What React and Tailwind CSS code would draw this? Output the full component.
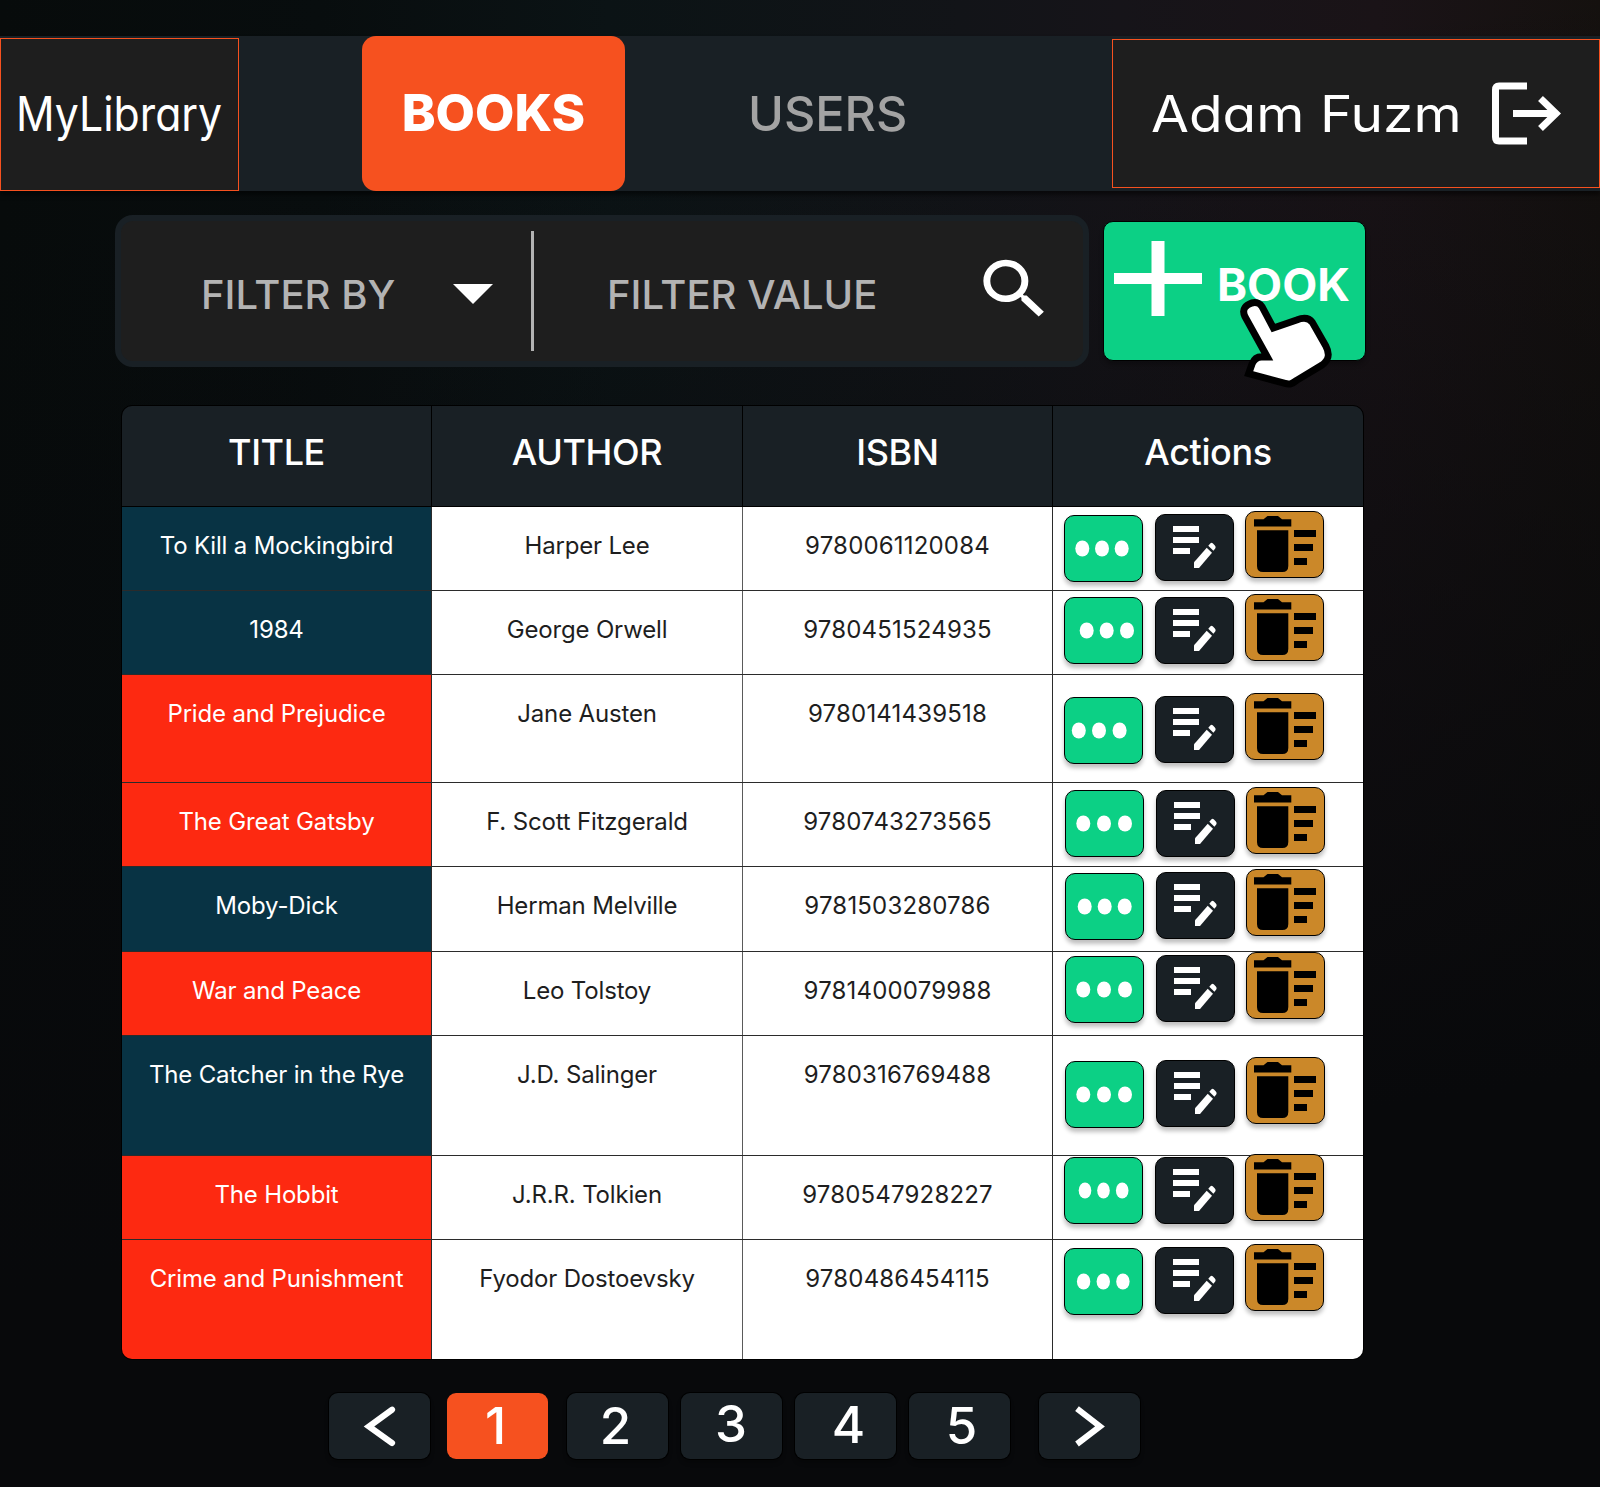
import React from "react";

const NAVY = "bg-[#083344]";
const RED = "bg-[#fd2911]";

const dots = (cx, rx = 7) => ({ cx, rx });

const BOOKS = [
  { title: "To Kill a Mockingbird", author: "Harper Lee", isbn: "9780061120084", bg: NAVY, h: "h-[84px]", pad: "pt-[8px] pl-[11px]", dots: dots([18.3, 38, 57.7]) },
  { title: "1984", author: "George Orwell", isbn: "9780451524935", bg: NAVY, h: "h-[84px]", pad: "pt-[7px] pl-[11px]", dots: dots([22.7, 42.7, 63]), raised: true },
  { title: "Pride and Prejudice", author: "Jane Austen", isbn: "9780141439518", bg: RED, h: "h-[108px]", pad: "pt-[22px] pl-[11px]", dots: dots([14.8, 35, 55.6]) },
  { title: "The Great Gatsby", author: "F. Scott Fitzgerald", isbn: "9780743273565", bg: RED, h: "h-[84px]", pad: "pt-[8px] pl-[12px]", dots: dots([18.3, 39, 60]), raised: true, trashShift: true },
  { title: "Moby-Dick", author: "Herman Melville", isbn: "9781503280786", bg: NAVY, h: "h-[85px]", pad: "pt-[6px] pl-[12px]", dots: dots([19.7, 39.7, 59.7]), trashShift: true },
  { title: "War and Peace", author: "Leo Tolstoy", isbn: "9781400079988", bg: RED, h: "h-[84px]", pad: "pt-[4px] pl-[12px]", dots: dots([18.3, 39, 60]), trashShift: true },
  { title: "The Catcher in the Rye", author: "J.D. Salinger", isbn: "9780316769488", bg: NAVY, h: "h-[120px]", pad: "pt-[25px] pl-[12px]", dots: dots([18.3, 39, 60]), trashShift: true },
  { title: "The Hobbit", author: "J.R.R. Tolkien", isbn: "9780547928227", bg: RED, h: "h-[84px]", pad: "pt-[2px] pl-[11px]", dots: dots([21, 39.5, 58.2], 6.3), raised: true },
  { title: "Crime and Punishment", author: "Fyodor Dostoevsky", isbn: "9780486454115", bg: RED, h: "h-[119px]", pad: "pt-[8px] pl-[11px]", dots: dots([19.6, 39.3, 58.9], 6.7) },
];

const COLS = "grid grid-cols-[310px_311px_310px_310px]";
const ACTION = "h-[67px] w-[79px] shrink-0 rounded-[10px] border border-black shadow-[0_4px_4px_rgba(0,0,0,0.25)]";

function ActionIcon({ children }) {
  return (
    <svg className="-mt-px -ml-px block h-[67px] w-[79px]" viewBox="0 0 79 67">
      {children}
    </svg>
  );
}

function Actions({ row }) {
  return (
    <div className={`flex items-start bg-white ${row.pad}`}>
      <button className={`${ACTION} bg-[#0cd085] ${row.raised ? "-mt-px" : ""}`}>
        <ActionIcon>
          {row.dots.cx.map((x) => (
            <ellipse key={x} cx={x} cy="33.5" rx={row.dots.rx} ry="8" fill="#fff" />
          ))}
        </ActionIcon>
      </button>
      <button className={`${ACTION} -mt-px ml-[12px] bg-[#192025]`}>
        <ActionIcon>
          <g fill="#fff">
            <path d="M18 12h26v6H18zM18 23h26v6H18zM18 34h17v6H18z" />
            <path d="M39 48.3 51.7 33.7l5.3 5L44 54h-5z" />
            <path d="M53.3 31.8 55.5 29.3q1-1 2.2 0l2.2 2.2q1.4 1.5 .3 3l-1.8 2.2z" />
          </g>
        </ActionIcon>
      </button>
      <button className={`${ACTION} -mt-[4px] ml-[11px] bg-[#cb8829]`}>
        <ActionIcon>
          <g transform={row.trashShift ? "translate(-1 0)" : undefined}>
            <path d="M9 8.3H18.5L22.5 5H33L37 8.3H46.3V15.5H9z" />
            <path d="M12 19.2H43.3V55q0 6-6 6H18q-6 0-6-6z" />
            <path d="M49 19h22v7H49zM49 33h19v7H49zM49 47h13v7H49z" />
          </g>
        </ActionIcon>
      </button>
    </div>
  );
}

function Header() {
  return (
    <header className="mt-[36px] flex h-[155px] bg-[#192025] shadow-[0_4px_4px_rgba(0,0,0,0.5)]">
      <div className="mt-[2px] h-[153px] w-[239px] border border-[#f6511f] bg-[#1e1e1e] pl-[15px]">
        <span className="inline-block origin-left scale-x-[0.9] text-[47.5px] leading-[149px] whitespace-nowrap [font-feature-settings:'cv11']">
          MyLibrary
        </span>
      </div>
      <nav className="ml-[123px] flex">
        <a className="h-[155px] w-[263px] rounded-[14px] bg-[#f6511f] text-center text-[51px] leading-[154px] font-extrabold">
          BOOKS
        </a>
        <a className="ml-[123px] text-[48.5px] leading-[155px] font-medium text-[#a3a3a3]">USERS</a>
      </nav>
      <div className="mt-[3px] ml-auto flex h-[149px] w-[488px] border border-[#f6511f] bg-[#1e1e1e] pl-[38px]">
        <span className="w-[340px] origin-left scale-x-[1.1] text-[50px] leading-[148px] whitespace-nowrap [font-feature-settings:'cv11']">
          Adam Fuzm
        </span>
        <svg className="mt-[42px] h-[64px] w-[72px] shrink-0" viewBox="0 0 72 64" fill="none" stroke="#fff" strokeWidth="7">
          <path d="M36 4H8Q4.500 4 4.500 8V55Q4.500 59 8 59H36" />
          <path d="M22 31.500H66M49.500 16.500 65 31.500 49.500 46.500" />
        </svg>
      </div>
    </header>
  );
}

function FilterBar() {
  return (
    <div className="flex h-[152px] w-[974px] rounded-[18px] border-[6px] border-[#192025] bg-[#1e1e1e] pl-[80px] text-[40px] leading-[148px] font-medium whitespace-nowrap text-[#b3b3b3]">
      <span className="w-[252px]">FILTER BY</span>
      <svg className="mt-[63px] h-[20px] w-[40px]" viewBox="0 0 40 20">
        <path d="M0 0H40L20 20z" fill="#fff" />
      </svg>
      <div className="mt-[10px] ml-[38px] h-[120px] w-[3px] bg-[#b3b3b3]" />
      <span className="ml-[73px] w-[366px]">FILTER VALUE</span>
      <svg className="mt-[29px] h-[78px] w-[83px]" viewBox="0 0 24 24" preserveAspectRatio="none" fill="#fff">
        <path d="M15.500 14h-.79l-.28-.27A6.471 6.471 0 0 0 16 9.500 6.500 6.500 0 1 0 9.500 16c1.610 0 3.090-.59 4.230-1.570l.27.28v.79l5 4.990L20.490 19l-4.990-5zm-6 0C7.010 14 5 11.990 5 9.500S7.010 5 9.500 5 14 7.010 14 9.500 11.990 14 9.500 14z" />
      </svg>
    </div>
  );
}

function AddBook() {
  return (
    <button className="relative mt-[6px] ml-[14px] flex h-[140px] w-[263px] rounded-[10px] border border-black bg-[#0cd085] shadow-[0_4px_4px_rgba(0,0,0,0.25)]">
      <svg className="mt-[19px] ml-[10px] h-[75px] w-[88px]" viewBox="0 0 88 75" fill="#fff">
        <path d="M37.500 0h13v75h-13zM0 32h88v11H0z" />
      </svg>
      <span className="ml-[15px] text-[45.5px] leading-[125px] font-bold">BOOK</span>
      <svg className="absolute top-[75px] left-[133px] h-[95px] w-[104px]" viewBox="561 291 312 285" fill="#fff" stroke="#000" strokeWidth="21">
        <path d="M652 471 585 350C573 325 590 315 605 309C620 305 631 311 636 320L670 384 740 360C765 350 778 355 787 367L827 437C840 462 838 480 815 496L740 541C728 550 720 555 705 550L596 521 606 492C613 475 625 469 640 471Z" />
      </svg>
    </button>
  );
}

function BookTable() {
  return (
    <div className="mt-[38px] ml-[121px] w-[1243px] overflow-hidden rounded-[11px] border border-black bg-black">
      <div className={`${COLS} h-[101px] border-b border-black bg-[#192025] text-center text-[36px] leading-[92px] font-medium tracking-[-0.4px]`}>
        <div className="border-r border-black">TITLE</div>
        <div className="border-r border-black">AUTHOR</div>
        <div className="border-r border-black">ISBN</div>
        <div>Actions</div>
      </div>
      {BOOKS.map((row, i) => (
        <div
          key={row.isbn}
          className={`${COLS} ${row.h} text-center text-[24px] leading-[77px] tracking-[-0.17px] text-[#1e1e1e] ${i < BOOKS.length - 1 ? "border-b border-[#2b2b2b]" : ""}`}
        >
          <div className={`${row.bg} border-r border-[#2b2b2b] text-white`}>{row.title}</div>
          <div className="border-r border-[#5a5a5a] bg-white">{row.author}</div>
          <div className="border-r border-[#2b2b2b] bg-white tracking-[0.18px]">{row.isbn}</div>
          <Actions row={row} />
        </div>
      ))}
    </div>
  );
}

const PAGE = "h-[66px] w-[101px] rounded-[9px] bg-[#192025] shadow-[0_0_0_1px_#000,0_4px_4px_rgba(0,0,0,0.25)]";

function Pagination() {
  return (
    <div className="mt-[33px] ml-[329px] flex text-center text-[51px] font-medium">
      <button className={PAGE}>
        <svg className="h-[66px] w-[101px]" viewBox="0 0 101 66" fill="none" stroke="#fff" strokeWidth="6.200" strokeLinecap="round">
          <path d="M63 16.700 40 33.500 63 50" />
        </svg>
      </button>
      <button className="ml-[17px] h-[66px] w-[101px] rounded-[9px] bg-[#f6511f] pr-[4px] leading-[64px]">1</button>
      <button className={`${PAGE} ml-[19px] pr-[4px] leading-[64px]`}>2</button>
      <button className={`${PAGE} ml-[13px] pr-[1px] pb-[4px] leading-[62px]`}>3</button>
      <button className={`${PAGE} ml-[13px] pb-[2px] pl-[6px] leading-[62px]`}>4</button>
      <button className={`${PAGE} ml-[13px] pl-[4px] leading-[64px]`}>5</button>
      <button className={`${PAGE} ml-[29px]`}>
        <svg className="h-[66px] w-[101px]" viewBox="0 0 101 66" fill="none" stroke="#fff" strokeWidth="6">
          <path d="M38 15.700 61 33.500 38 51" />
        </svg>
      </button>
    </div>
  );
}

export default function App() {
  return (
    <div className="flex h-[1487px] w-[1600px] flex-col overflow-hidden bg-[#08090b] bg-[linear-gradient(172deg,rgba(8,9,11,0)_12%,rgba(8,9,11,0.6)_48%,#08090b_76%),linear-gradient(90deg,#070b0b_0%,#080d0e_20%,#0b1315_38%,#121418_60%,#161419_70%,#1a1317_86%,#15110f_100%)] font-[Inter,sans-serif] text-white">
      <Header />
      <div className="mt-[24px] ml-[115px] flex">
        <FilterBar />
        <AddBook />
      </div>
      <BookTable />
      <Pagination />
    </div>
  );
}
